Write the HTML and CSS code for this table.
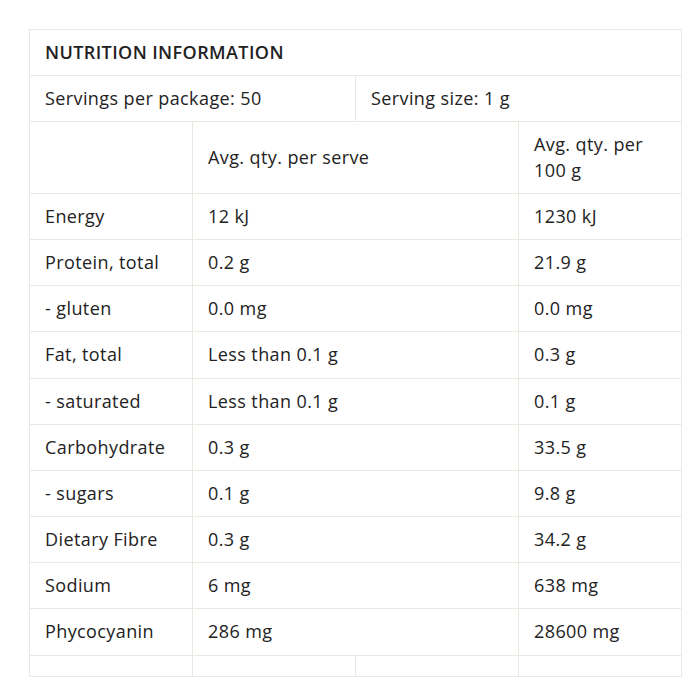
FILE: index.html
```html
<!DOCTYPE html>
<html>
<head>
<meta charset="utf-8">
<link rel="stylesheet" href="styles.css">
</head>
<body>
<div class="wrap">
<table class="nutri">
<colgroup><col><col><col><col></colgroup>
<tr><td colspan="4" class="title">NUTRITION INFORMATION</td></tr>
<tr><td colspan="2">Servings per package: 50</td><td colspan="2">Serving size: 1 g</td></tr>
<tr><td></td><td colspan="2">Avg. qty. per serve</td><td>Avg. qty. per 100 g</td></tr>
<tr><td>Energy</td><td colspan="2">12 kJ</td><td>1230 kJ</td></tr>
<tr><td>Protein, total</td><td colspan="2">0.2 g</td><td>21.9 g</td></tr>
<tr><td>- gluten</td><td colspan="2">0.0 mg</td><td>0.0 mg</td></tr>
<tr><td>Fat, total</td><td colspan="2">Less than 0.1 g</td><td>0.3 g</td></tr>
<tr><td>- saturated</td><td colspan="2">Less than 0.1 g</td><td>0.1 g</td></tr>
<tr><td>Carbohydrate</td><td colspan="2">0.3 g</td><td>33.5 g</td></tr>
<tr><td>- sugars</td><td colspan="2">0.1 g</td><td>9.8 g</td></tr>
<tr><td>Dietary Fibre</td><td colspan="2">0.3 g</td><td>34.2 g</td></tr>
<tr><td>Sodium</td><td colspan="2">6 mg</td><td>638 mg</td></tr>
<tr><td>Phycocyanin</td><td colspan="2">286 mg</td><td>28600 mg</td></tr>
<tr class="empty"><td></td><td></td><td></td><td></td></tr>
</table>
</div>
</body>
</html>
```
FILE: styles.css
```css
html, body { margin: 0; padding: 0; background: #fff; }
.wrap { padding: 29px 0 0 29px; }
.nutri {
  width: 653px;
  table-layout: fixed;
  border-collapse: collapse;
  font-family: "Open Sans", sans-serif;
  font-size: 18px;
  line-height: 1.4;
  letter-spacing: 0.4px;
  color: #222;
  border: 1px solid #ebe8e2;
}
.nutri td {
  border: 1px solid #ebe8e2;
  padding: 10px 15px;
  vertical-align: middle;
  text-align: left;
}
.nutri .title { font-weight: 600; letter-spacing: 0.4px; }
.nutri .empty td { padding: 10px 15px; height: 0; line-height: 0; font-size: 0; }
```
